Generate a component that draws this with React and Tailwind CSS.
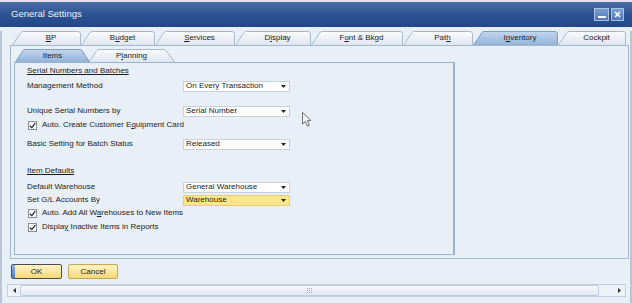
import React from 'react';

const Tab = ({ className, width, slant = 9, on, children, trap }) => {
  const h = trap ? 13 : 14;
  const w = width;
  const d = trap
    ? `M0.5 ${h} L${slant} 1.5 Q${slant + 1} 0.5 ${slant + 2} 0.5 L${w - slant - 2} 0.5 Q${w - slant - 1} 0.5 ${w - slant} 1.5 L${w - 0.5} ${h}`
    : `M0.5 ${h} L${slant} 1.5 Q${slant + 1} 0.5 ${slant + 2} 0.5 L${w - 3} 0.5 Q${w - 0.5} 0.5 ${w - 0.5} 3 L${w - 0.5} ${h}`;
  return (
    <div className={`relative shrink-0 ${className}`}>
      <svg width={w} height={h + 1} className="absolute left-0 top-0">
        <path d={d} fill={on ? 'url(#tabOn)' : 'url(#tabOff)'} stroke={on ? '#7f9cc3' : '#a9b9cd'} strokeWidth="1" />
      </svg>
      <div className={`relative flex h-full items-center justify-center text-[8px] text-[#1c1c1c] ${trap ? '' : 'pl-[9px]'}`}>
        {children}
      </div>
    </div>
  );
};

const Dropdown = ({ value, yellow }) => (
  <div
    className={`flex h-[11px] w-[107px] items-center border pl-[2px] text-[8px] leading-none text-[#1c1c1c] ${
      yellow ? 'border-[#e9cf6e] bg-[#fbe68e]' : 'border-[#c9d1dc] bg-white'
    }`}
  >
    <span className="flex-1">{value}</span>
    <svg width="5" height="3" className="mr-[3px]">
      <path d="M0 0H5L2.5 3Z" fill="#222" />
    </svg>
  </div>
);

const Check = ({ children }) => (
  <div className="ml-[13px] flex h-[10px] items-center gap-[5px] text-[8px] text-[#1c1c1c]">
    <div className="flex h-[9px] w-[9px] items-center justify-center border border-[#858f9c] bg-white">
      <svg width="7" height="7">
        <path d="M0.8 3.6 L2.8 5.6 L6.3 1.2" fill="none" stroke="#222" strokeWidth="1.3" />
      </svg>
    </div>
    <span>{children}</span>
  </div>
);

const Row = ({ label, value, yellow, className }) => (
  <div className={`flex h-[12px] items-center pl-[12px] ${className}`}>
    <span className="w-[156px] text-[8px] text-[#1c1c1c]">{label}</span>
    <Dropdown value={value} yellow={yellow} />
  </div>
);

export default function App() {
  return (
    <div className="relative h-[303px] w-[632px] overflow-hidden bg-[#e9eff6] font-['Liberation_Sans',Arial,sans-serif]">
      <svg width="0" height="0" className="absolute">
        <defs>
          <linearGradient id="tabOff" x1="0" y1="0" x2="0" y2="1">
            <stop offset="0" stopColor="#fbfcfe" />
            <stop offset="1" stopColor="#dde5ef" />
          </linearGradient>
          <linearGradient id="tabOn" x1="0" y1="0" x2="0" y2="1">
            <stop offset="0" stopColor="#c2d5ec" />
            <stop offset="1" stopColor="#93b3da" />
          </linearGradient>
        </defs>
      </svg>

      {/* title bar */}
      <div className="flex h-[27px] items-center border-t-2 border-[#dfe3e9] bg-gradient-to-b from-[#4b6fa6] via-[#2c5292] to-[#22488a] pl-[11px] pr-[8px]">
        <span className="flex-1 text-[9.5px] text-[#eef2f8]">General Settings</span>
        <div className="flex gap-[2px]">
          <div className="flex h-[13px] w-[15px] items-end justify-center border border-[#a9c0e0] bg-gradient-to-b from-[#7c9fd2] to-[#4f78b8] pb-[2px]">
            <div className="h-[2px] w-[8px] bg-white" />
          </div>
          <div className="flex h-[13px] w-[13px] items-center justify-center border border-[#a9c0e0] bg-gradient-to-b from-[#7c9fd2] to-[#4f78b8]">
            <svg width="7" height="7">
              <path d="M1 1L6 6M6 1L1 6" stroke="white" strokeWidth="1.6" />
            </svg>
          </div>
        </div>
      </div>

      {/* body */}
      <div className="h-[276px] border-x-2 border-[#b9c5d3]">
        <div className="ml-[10px] mt-[4px] flex h-[14px]">
          <Tab className="w-[69px]" width={69}><u>B</u>P</Tab>
          <Tab className="w-[74px]" width={74}>B<u>u</u>dget</Tab>
          <Tab className="w-[80px]" width={80}><u>S</u>ervices</Tab>
          <Tab className="w-[76px]" width={76}>D<u>i</u>splay</Tab>
          <Tab className="w-[92px]" width={92}>F<u>o</u>nt &amp; Bkgd</Tab>
          <Tab className="w-[70px]" width={70}>Pat<u>h</u></Tab>
          <Tab className="w-[85px]" width={85} on>I<u>n</u>ventory</Tab>
          <Tab className="w-[68px]" width={68}>Cockpit</Tab>
        </div>

        <div className="ml-[8px] h-[214px] w-[619px] border border-[#a6b8cf] px-[3px] pb-[3px] pt-[3px]">
          <div className="ml-[1px] flex h-[13px]">
            <Tab className="z-10 w-[75px]" width={75} slant={8} trap on>Items</Tab>
            <Tab className="-ml-[2px] w-[87px]" width={87} slant={9} trap>P<u>l</u>anning</Tab>
          </div>
          <div className="h-[193px] w-[441px] border border-r-2 border-[#9cb2ce] pt-[2px]">
            <div className="flex h-[12px] items-center pl-[12px] text-[8px] text-[#1c1c1c] underline">Serial Numbers and Batches</div>
            <Row className="mt-[3px]" label="Management Method" value="On Every Transaction" />
            <Row className="mt-[13px]" label="Unique Serial Numbers by" value="Serial Number" />
            <div className="mt-[3px]">
              <Check>Auto. Create Customer E<u>q</u>uipment Card</Check>
            </div>
            <Row className="mt-[8px]" label="Basic Setting for Batch Status" value="Released" />
            <div className="mt-[15px] flex h-[12px] items-center pl-[12px] text-[8px] text-[#1c1c1c] underline">Item Defaults</div>
            <Row className="mt-[4px]" label="Default Warehouse" value="General Warehouse" />
            <Row className="mt-[1px]" label="Set G/L Accounts By" value="Warehouse" yellow />
            <div className="mt-[2px]">
              <Check>Auto. Add All W<u>a</u>rehouses to New Items</Check>
            </div>
            <div className="mt-[4px]">
              <Check>Displa<u>y</u> Inactive Items in Reports</Check>
            </div>
          </div>
        </div>

        {/* buttons */}
        <div className="ml-[9px] mt-[5px] flex gap-[6px]">
          <div className="flex h-[15px] w-[51px] items-center overflow-hidden rounded-[2px] border border-[#4d4d4d] bg-gradient-to-b from-[#fff4c4] to-[#f9d977] text-[8px] text-[#1c1c1c]">
            <div className="h-full w-[3px] bg-gradient-to-b from-[#8fb2e6] to-[#4e7fc8]" />
            <span className="flex-1 pr-[3px] text-center">OK</span>
          </div>
          <div className="flex h-[15px] w-[50px] items-center justify-center rounded-[2px] border border-[#c6a754] bg-gradient-to-b from-[#fff4c4] to-[#f9d977] text-[8px] text-[#1c1c1c]">
            Cancel
          </div>
        </div>

        {/* scrollbar */}
        <div className="ml-[5px] mt-[5px] flex h-[13px] w-[619px] items-center border border-[#c3cedb] bg-[#edf2f8]">
          <div className="flex w-[12px] justify-center">
            <svg width="3" height="5"><path d="M3 0V5L0 2.5Z" fill="#333" /></svg>
          </div>
          <div className="flex h-[11px] w-[579px] items-center justify-center rounded-[2px] border border-[#c0ccdb] bg-gradient-to-b from-[#f7f9fc] to-[#e1e8f1]">
            <svg width="6" height="5">
              <g fill="#9aa8ba">
                <rect x="0" y="0" width="1" height="1" /><rect x="2" y="0" width="1" height="1" /><rect x="4" y="0" width="1" height="1" />
                <rect x="0" y="2" width="1" height="1" /><rect x="2" y="2" width="1" height="1" /><rect x="4" y="2" width="1" height="1" />
                <rect x="0" y="4" width="1" height="1" /><rect x="2" y="4" width="1" height="1" /><rect x="4" y="4" width="1" height="1" />
              </g>
            </svg>
          </div>
          <div className="flex flex-1 justify-end pr-[4px]">
            <svg width="3" height="5"><path d="M0 0V5L3 2.5Z" fill="#333" /></svg>
          </div>
        </div>
      </div>

      {/* mouse pointer */}
      <svg width="14" height="18" className="absolute left-[301px] top-[111px]">
        <path d="M1.5 1.5 L1.5 13 L4.3 10.4 L6.3 15 L8.3 14.1 L6.4 9.6 L10 9.6 Z" fill="#f4f6f9" stroke="#6b6f75" strokeWidth="1" strokeLinejoin="round" />
      </svg>
    </div>
  );
}
